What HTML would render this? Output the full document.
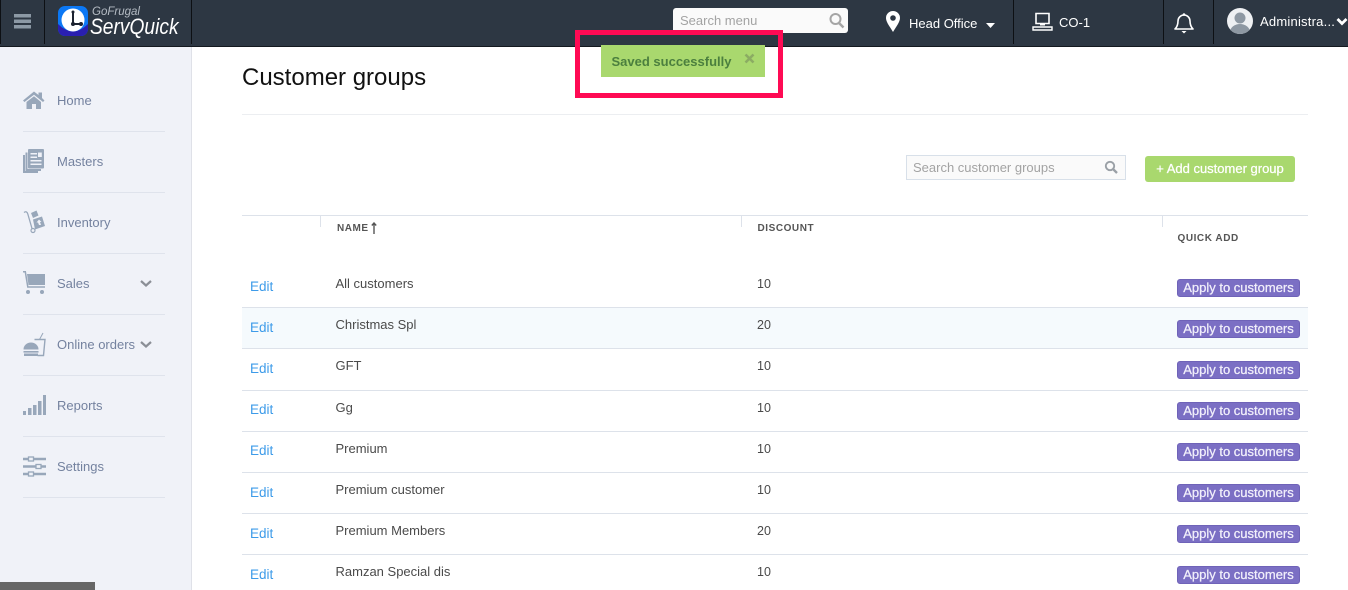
<!DOCTYPE html>
<html><head><meta charset="utf-8"><style>
html,body{margin:0;padding:0}
body{width:1348px;height:590px;position:relative;overflow:hidden;background:#fff;font-family:"Liberation Sans",Arial,sans-serif;font-size:13px;color:#4a4a4a}
.a{position:absolute;white-space:nowrap}
.top{position:absolute;left:0;top:0;width:1348px;height:46px;background:#2d3743;border-bottom:1px solid #14191f}
.vs{position:absolute;top:0;width:1px;height:44px;background:#0d1014}
.side{position:absolute;left:0;top:47px;width:191px;height:543px;background:#f0f2f8;border-right:1px solid #dfe1e8}
.nl{position:absolute;left:23px;width:142px;height:1px;background:#dfe3ec}
.nt{position:absolute;left:57px;font-size:13px;line-height:16px;color:#74829f;white-space:nowrap}
.ic{position:absolute;left:0;top:0}
.rl{position:absolute;left:242px;width:1066px;height:1px;background:#dde2ea}
.edit{position:absolute;left:250px;color:#3d9be9;font-size:13.5px;line-height:16px}
.nm{position:absolute;left:335.5px;color:#4a4a4a;font-size:13px;line-height:16px;white-space:nowrap}
.dc{position:absolute;left:757px;color:#4a4a4a;font-size:12.5px;line-height:16px}
.ap{position:absolute;left:1177px;width:123px;height:18px;box-sizing:border-box;background:#7b6fc4;border:1px solid #6f63b8;border-radius:3px;color:#f2f0fb;font-size:13px;line-height:16px;text-align:center;-webkit-text-stroke:.25px #f2f0fb;white-space:nowrap}
.th{position:absolute;font-size:10px;font-weight:bold;color:#555;letter-spacing:.55px;line-height:12px;white-space:nowrap}
</style></head><body>
<div class="top"></div>
<div class="vs" style="left:0"></div><div class="vs" style="left:44px"></div><div class="vs" style="left:191px"></div><div class="vs" style="left:1013px"></div><div class="vs" style="left:1163px"></div><div class="vs" style="left:1213px"></div>
<svg class="ic" width="44" height="44"><path d="M14 14h17v3.500H14zM14 19.500h17v3.500H14zM14 25h17v3.500H14z" fill="#8c99a5"/></svg>
<svg class="ic" style="left:58px;top:6px" width="30" height="30"><rect width="30" height="30" rx="7" fill="#0b78f5"/><path d="M0 18Q15 33 30 18V23a7 7 0 0 1-7 7H7a7 7 0 0 1-7-7z" fill="#2a1fb0"/><circle cx="15" cy="14" r="11.500" fill="#fff"/><path d="M15 5v13M15 18h8" stroke="#1c2330" stroke-width="2" fill="none"/><circle cx="15" cy="6" r="1.500" fill="#1c2330"/><circle cx="15" cy="18" r="2" fill="#1c2330"/><circle cx="23" cy="18" r="2" fill="#1c2330"/></svg>
<div class="a" style="left:92px;top:4px;font-size:11.500px;line-height:16px;font-style:italic;color:#b5bcc4">GoFrugal</div>
<div class="a" style="left:90px;top:13px;font-size:22px;line-height:28px;font-style:italic;color:#fff;transform:scaleX(.873);transform-origin:0 0">ServQuick</div>

<div class="a" style="left:673px;top:8px;width:175px;height:25px;box-sizing:border-box;background:#fafafa;border-radius:3px;padding-left:7px;font-size:13px;line-height:25px;color:#a3a3a3">Search menu</div>
<svg class="ic" style="left:828px;top:12px" width="18" height="18"><circle cx="7.500" cy="7" r="5" fill="none" stroke="#a5a5a5" stroke-width="2"/><path d="M11 11l4.500 4.500" stroke="#a5a5a5" stroke-width="2.500"/></svg>
<svg class="ic" style="left:885px;top:11px" width="16" height="21"><path d="M8 0a7 7 0 0 1 7 7c0 4-4 9-7 14C5 16 1 11 1 7a7 7 0 0 1 7-7z" fill="#fff"/><circle cx="8" cy="7" r="2.800" fill="#2d3743"/></svg>
<div class="a" style="left:909px;top:16px;color:#fff;font-size:13px;line-height:16px">Head Office</div>
<svg class="ic" style="left:986px;top:23px" width="10" height="6"><path d="M0 0h9L4.500 5z" fill="#fff"/></svg>
<svg class="ic" style="left:1032px;top:12px" width="22" height="19"><path d="M4 1.500h13v10H4z" fill="none" stroke="#fff" stroke-width="1.600"/><path d="M1 15h19v3H1z" fill="none" stroke="#fff" stroke-width="1.400"/><path d="M8 12.500h5" stroke="#fff" stroke-width="2"/></svg>
<div class="a" style="left:1059px;top:15px;color:#fff;font-size:13px;line-height:16px">CO-1</div>
<svg class="ic" style="left:1173px;top:12px" width="22" height="22"><path d="M2 17c2-2 3-4 3-8a6 6 0 0 1 12 0c0 4 1 6 3 8z" fill="none" stroke="#fff" stroke-width="1.600" stroke-linejoin="round"/><path d="M8.500 19h5l-2.500 2.500z" fill="#fff"/><circle cx="11" cy="2.500" r="1.300" fill="#fff"/></svg>
<svg class="ic" style="left:1227px;top:8px" width="26" height="26"><defs><clipPath id="c"><circle cx="13" cy="13" r="13"/></clipPath></defs><circle cx="13" cy="13" r="13" fill="#eef0f3"/><g clip-path="url(#c)" fill="#8e98a3"><circle cx="13" cy="10" r="5.500"/><ellipse cx="13" cy="24" rx="10" ry="8"/></g></svg>
<div class="a" style="left:1260px;top:14px;color:#fff;font-size:13px;line-height:16px;letter-spacing:.22px">Administra...</div>
<svg class="ic" style="left:1336px;top:17px" width="12" height="10"><path d="M1.500 2l4.500 4.500L10.500 2" fill="none" stroke="#fff" stroke-width="2.800"/></svg>

<div class="side"></div>
<div class="nl" style="top:131px"></div><div class="nl" style="top:192px"></div><div class="nl" style="top:253px"></div><div class="nl" style="top:314px"></div><div class="nl" style="top:375px"></div><div class="nl" style="top:436px"></div><div class="nl" style="top:497px"></div>
<div class="nt" style="top:92.500px">Home</div><div class="nt" style="top:153.500px">Masters</div><div class="nt" style="top:214.500px">Inventory</div><div class="nt" style="top:275.500px">Sales</div><div class="nt" style="top:336.500px">Online orders</div><div class="nt" style="top:397.500px">Reports</div><div class="nt" style="top:458.500px">Settings</div>
<svg class="ic" style="left:23px;top:91px" width="22" height="18"><path d="M0 9.500L11 .5l4.500 3.500V1.500h3.500v5.500L21.500 9.500l-1.500 1.500L11 3.800 1.500 11z M3.500 11L11 5.200 18 11v7h-5v-5H9v5H3.500z" fill="#98a7ba"/></svg>
<svg class="ic" style="left:23px;top:149px" width="22" height="25"><path d="M0 6h2v16h13v2H0z" fill="#98a7ba"/><path d="M2.500 3.500h2v16.500H18v2H2.500z" fill="#98a7ba"/><rect x="5" y="0" width="16" height="19.500" rx="1" fill="#98a7ba"/><path d="M7.500 4h6.500v1.500H7.500zM7.500 7.500h6.500V9H7.500zM7.500 11h11v1.500h-11zM7.500 14.500h11V16h-11z" fill="#f0f2f8"/><rect x="15" y="3.500" width="3.800" height="4.500" fill="#f0f2f8"/></svg>
<svg class="ic" style="left:23px;top:210px" width="23" height="24"><path d="M1 2.500c2-1.500 3.200-.5 3.800 1.500L9 18.500" fill="none" stroke="#98a7ba" stroke-width="1.300"/><path d="M8 3l5.500-2.500 2 5-5.500 2.500zM10 9.500l9-3 3 9.500-10 3.500z" fill="#98a7ba"/><path d="M16 9.500l2.500 2.500h-1.500l1 3h-2l-1-2.500H13.500z" fill="#f0f2f8"/><circle cx="10" cy="20.500" r="2" fill="#f0f2f8" stroke="#98a7ba" stroke-width="1.200"/></svg>
<svg class="ic" style="left:23px;top:271px" width="23" height="24"><path d="M4 3h18v11H5.500z" fill="#98a7ba"/><path d="M0 .7h2.300L4.800 16h17.200" fill="none" stroke="#98a7ba" stroke-width="1.500"/><circle cx="5" cy="21" r="2" fill="#98a7ba"/><circle cx="19" cy="21" r="2" fill="#98a7ba"/></svg>
<svg class="ic" style="left:23px;top:332px" width="23" height="25"><path d="M11.500 7.500h10.500l-1.500 16h-6" fill="none" stroke="#98a7ba" stroke-width="1.400"/><path d="M16.500 7.500l3.500-6.500" stroke="#98a7ba" stroke-width="1"/><path d="M.5 17.500a7.500 7 0 0 1 15 0zM.5 19h15v1.600H.5zM1 21.500h14v2.500H1z" fill="#98a7ba"/></svg>
<svg class="ic" style="left:23px;top:395px" width="24" height="21"><path d="M0 16h3v4H0zM5 13h3.500v7H5zM10 10h3.500v10H10zM15 6h3.500v14H15zM20 0h3v20h-3z" fill="#98a7ba"/></svg>
<svg class="ic" style="left:23px;top:456px" width="24" height="21"><path d="M0 3h23M0 10.500h23M0 18h23" stroke="#98a7ba" stroke-width="2.500"/><rect x="5.500" y="1" width="5" height="4" fill="#f0f2f8" stroke="#98a7ba" stroke-width="1.300"/><rect x="13" y="8.500" width="5" height="4" fill="#f0f2f8" stroke="#98a7ba" stroke-width="1.300"/><rect x="5.500" y="16" width="5" height="4" fill="#f0f2f8" stroke="#98a7ba" stroke-width="1.300"/></svg>
<svg class="ic" style="left:140px;top:280px" width="12" height="8"><path d="M1 1l5 4.500L11 1" fill="none" stroke="#8b8f96" stroke-width="2.200"/></svg>
<svg class="ic" style="left:140px;top:341px" width="12" height="8"><path d="M1 1l5 4.500L11 1" fill="none" stroke="#8b8f96" stroke-width="2.200"/></svg>
<div class="a" style="left:0;top:582px;width:95px;height:8px;background:#666"></div>

<div class="a" style="left:242px;top:63px;font-size:24px;line-height:30px;color:#111">Customer groups</div>
<div class="rl" style="top:114px;background:#eceef1"></div>

<div class="a" style="left:906px;top:155px;width:220px;height:25px;box-sizing:border-box;background:#fafafa;border:1px solid #d8e0e9;padding-left:6px;font-size:13px;line-height:23px;color:#a3a3a3">Search customer groups</div>
<svg class="ic" style="left:1104px;top:160px" width="15" height="15"><circle cx="6" cy="6" r="4.200" fill="none" stroke="#9aa0a6" stroke-width="1.900"/><path d="M9 9l4 4" stroke="#9aa0a6" stroke-width="2.300"/></svg>
<div class="a" style="left:1145px;top:156px;width:150px;height:26px;background:#a9d86e;border-radius:3px;color:#fff;font-size:13px;-webkit-text-stroke:.25px #fff;line-height:25px;text-align:center">+ Add customer group</div>

<div class="rl" style="top:215px"></div>
<div class="a" style="left:320px;top:215px;width:1px;height:12px;background:#dde2ea"></div>
<div class="a" style="left:741px;top:215px;width:1px;height:12px;background:#dde2ea"></div>
<div class="a" style="left:1162px;top:215px;width:1px;height:12px;background:#dde2ea"></div>
<div class="th" style="left:337px;top:223px">NAME</div>
<svg class="ic" style="left:371px;top:222px" width="6" height="13"><path d="M3 12V2M.8 3.500L3 1l2.200 2.500" fill="none" stroke="#555" stroke-width="1.400"/></svg>
<div class="th" style="left:757.500px;top:223px">DISCOUNT</div>
<div class="th" style="left:1177.500px;top:233px">QUICK ADD</div>

<div class="a" style="left:242px;top:308px;width:1066px;height:40px;background:#f5fafd"></div>
<div class="rl" style="top:307px"></div><div class="rl" style="top:348px"></div><div class="rl" style="top:390px"></div><div class="rl" style="top:431px"></div><div class="rl" style="top:472px"></div><div class="rl" style="top:513px"></div><div class="rl" style="top:554px"></div>

<div class="edit" style="top:279px">Edit</div><div class="nm" style="top:276px">All customers</div><div class="dc" style="top:276px">10</div><div class="ap" style="top:279px">Apply to customers</div>
<div class="edit" style="top:320px">Edit</div><div class="nm" style="top:317px">Christmas Spl</div><div class="dc" style="top:317px">20</div><div class="ap" style="top:320px">Apply to customers</div>
<div class="edit" style="top:361px">Edit</div><div class="nm" style="top:358px">GFT</div><div class="dc" style="top:358px">10</div><div class="ap" style="top:361px">Apply to customers</div>
<div class="edit" style="top:402px">Edit</div><div class="nm" style="top:400px">Gg</div><div class="dc" style="top:400px">10</div><div class="ap" style="top:402px">Apply to customers</div>
<div class="edit" style="top:443px">Edit</div><div class="nm" style="top:441px">Premium</div><div class="dc" style="top:441px">10</div><div class="ap" style="top:443px">Apply to customers</div>
<div class="edit" style="top:485px">Edit</div><div class="nm" style="top:482px">Premium customer</div><div class="dc" style="top:482px">10</div><div class="ap" style="top:484px">Apply to customers</div>
<div class="edit" style="top:526px">Edit</div><div class="nm" style="top:523px">Premium Members</div><div class="dc" style="top:523px">20</div><div class="ap" style="top:525px">Apply to customers</div>
<div class="edit" style="top:567px">Edit</div><div class="nm" style="top:564px">Ramzan Special dis</div><div class="dc" style="top:564px">10</div><div class="ap" style="top:566px">Apply to customers</div>

<div class="a" style="left:601px;top:45px;width:164px;height:32px;background:#a9d86e"></div>
<div class="a" style="left:611.500px;top:54px;font-size:13px;font-weight:bold;line-height:16px;color:#4b7f3e">Saved successfully</div>
<svg class="ic" style="left:744px;top:53px" width="12" height="12"><path d="M1.500 1.500l8 8M9.500 1.500l-8 8" stroke="#8bac63" stroke-width="2.600"/></svg>
<div class="a" style="left:575px;top:30px;width:208px;height:68px;box-sizing:border-box;border:5px solid #ff0a54"></div>
</body></html>
